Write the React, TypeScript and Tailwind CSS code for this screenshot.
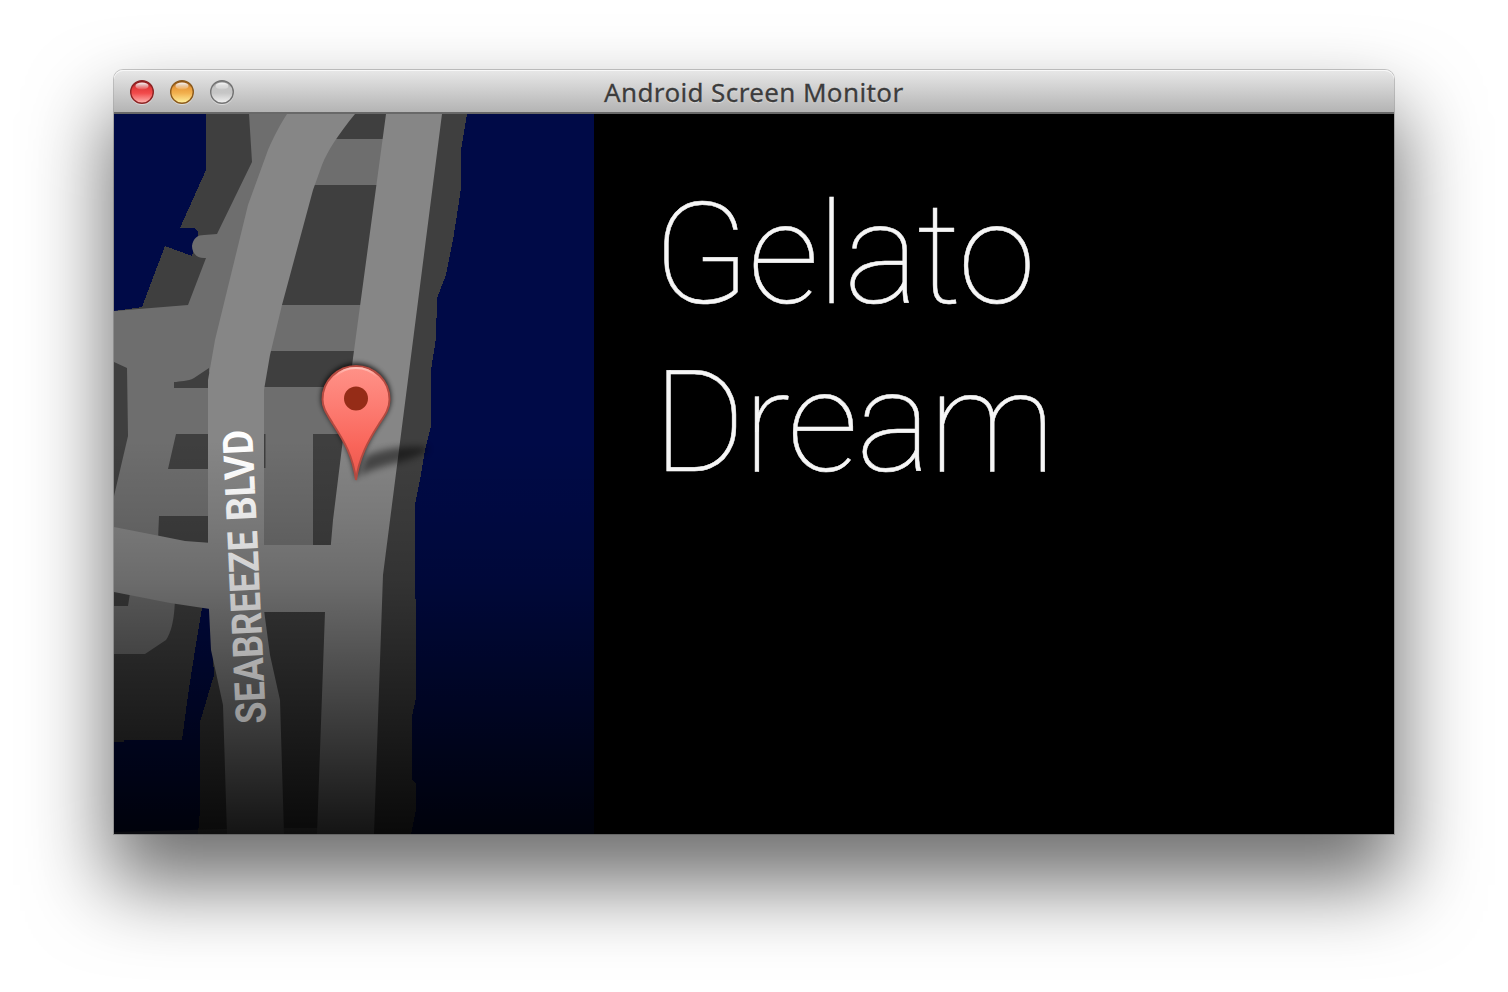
import React from "react";

function TrafficLights() {
  return (
    <svg className="relative top-px" width="112" height="28" viewBox="126 78 112 28" aria-hidden="true">
      <defs>
        <linearGradient id="red" x1="0" y1="0" x2="0" y2="1">
          <stop offset="0" stopColor="#7d1113" />
          <stop offset="0.3" stopColor="#e23a3b" />
          <stop offset="0.55" stopColor="#f24a4a" />
          <stop offset="1" stopColor="#ffb8b4" />
        </linearGradient>
        <linearGradient id="amber" x1="0" y1="0" x2="0" y2="1">
          <stop offset="0" stopColor="#83460d" />
          <stop offset="0.3" stopColor="#e89a3a" />
          <stop offset="0.55" stopColor="#f2b04e" />
          <stop offset="1" stopColor="#fff3a0" />
        </linearGradient>
        <linearGradient id="clear" x1="0" y1="0" x2="0" y2="1">
          <stop offset="0" stopColor="#808080" />
          <stop offset="0.3" stopColor="#c4c4c4" />
          <stop offset="0.55" stopColor="#c6c6c6" />
          <stop offset="1" stopColor="#f2f2f2" />
        </linearGradient>
        <linearGradient id="gloss" x1="0" y1="0" x2="0" y2="1">
          <stop offset="0" stopColor="#fff" stopOpacity="0.95" />
          <stop offset="1" stopColor="#fff" stopOpacity="0.1" />
        </linearGradient>
      </defs>
      {[
        { x: 142, fill: "url(#red)", ring: "#8c2424" },
        { x: 182, fill: "url(#amber)", ring: "#8b5a1c" },
        { x: 222, fill: "url(#clear)", ring: "#737373" },
      ].map((b) => (
        <g key={b.x}>
          <circle cx={b.x} cy="93" r="12" fill="#fff" opacity="0.45" />
          <circle cx={b.x} cy="92" r="11.3" fill={b.fill} stroke={b.ring} strokeWidth="1.4" />
          <ellipse cx={b.x} cy="86" rx="6.6" ry="3.4" fill="url(#gloss)" />
        </g>
      ))}
    </svg>
  );
}

function StreetMap() {
  return (
    <svg className="block shrink-0" width="480" height="720" viewBox="114 114 480 720">
      <defs>
        <linearGradient id="fade" gradientUnits="userSpaceOnUse" x1="0" y1="440" x2="0" y2="834">
          <stop offset="0" stopOpacity="0" />
          <stop offset="0.2" stopOpacity="0.1" />
          <stop offset="0.36" stopOpacity="0.2" />
          <stop offset="0.7" stopOpacity="0.54" />
          <stop offset="1" stopOpacity="0.85" />
        </linearGradient>
        <linearGradient id="pin" x1="0" y1="0" x2="0" y2="1">
          <stop offset="0" stopColor="#ff9288" />
          <stop offset="0.3" stopColor="#fd8076" />
          <stop offset="0.7" stopColor="#f9655a" />
          <stop offset="1" stopColor="#e8564b" />
        </linearGradient>
        <linearGradient id="rim" x1="0" y1="0" x2="0" y2="1">
          <stop offset="0" stopColor="#ffc0b8" />
          <stop offset="0.3" stopColor="#ffc0b8" stopOpacity="0" />
        </linearGradient>
        <linearGradient id="streetName" gradientUnits="userSpaceOnUse" x1="266" y1="0" x2="559" y2="0">
          <stop offset="0" stopColor="#969696" />
          <stop offset="0.6" stopColor="#dadada" />
          <stop offset="0.85" stopColor="#f8f8f8" />
          <stop offset="1" stopColor="#fff" />
        </linearGradient>
        <filter id="soft" x="-30%" y="-30%" width="160%" height="160%">
          <feGaussianBlur stdDeviation="2.5" />
        </filter>
        <filter id="softer" x="-30%" y="-50%" width="160%" height="200%">
          <feGaussianBlur stdDeviation="3.5" />
        </filter>
      </defs>

      <rect x="114" y="114" width="480" height="720" fill="#000a47" />

      {/* land */}
      <g shapeRendering="crispEdges">
        <path
          fill="#3f3f3f"
          d="M206 114H467L461 150V188L458 208L453 240L446 275L437 298L436 338L431 370V426L425 450L420 480L415 505V598L416 600V698L412 716V780L416 784V810L411 834H114V311L142 307L165 246L192 256L198 237V231L194 228H180L206 170Z"
        />
        <path fill="#000a47" d="M202 608H210L214 675L200 722V810L198 834H114V742H124V740H182L188 695L195 650Z" />
      </g>

      {/* minor streets */}
      <g fill="#6e6e6e">
        <path d="M249 114H300L215 370L186 383L174 382V388H270V434H176L168 469H270V516H159L158 540L114 530V496L128 436L127 368L114 362V311L188 305L206 258C196 259 192 252 192 246C193 238 198 235 204 235L217 234L252 162Z" />
        <path fill="#3f3f3f" d="M209 368L194 378C188 382 180 380 174 383V388H209Z" />
        <path d="M300 139H384V185H300ZM260 305H372V351H260ZM262 387H362V434H262ZM264 434H313V546H264Z" />
        <path d="M114 590L175 600C174 622 171 632 166 640L145 654H114Z" />
      </g>
      <path fill="#3f3f3f" d="M114 590L130 593L128 606H114Z" />
      <path fill="#3f3f3f" d="M264 434H265.500V468H264Z" />

      {/* main streets */}
      <g fill="#868686">
        <path d="M287 114H355C338 135 328 150 322 165L313 190L282 305L270 355L264 390L264 610L270 655L280 700L284 834H227L223 705L211 650L208 590V380L215 340L248 205L268 150C275 134 280 125 287 114Z" />
        <path d="M386 114H442L383 575L374 834H317L325 612L333 520L353 358Z" />
        <path d="M114 527L160 536L185 541L212 543L264 545H332L360 540V610L325 612H264L210 609L170 603L114 592Z" />
      </g>
      <path fill="#868686" d="M114 832L227 829V834H114ZM284 828H318V834H284Z" opacity="0.5" />

      <rect x="114" y="440" width="480" height="394" fill="url(#fade)" />

      {/* street name */}
      <g
        transform="rotate(-92.7 266 722)"
        fill="url(#streetName)"
        fontFamily="Roboto, sans-serif"
        fontWeight="700"
        fontSize="42"
      >
        <text x="265" y="722" textLength="193" lengthAdjust="spacingAndGlyphs">
          SEABREEZE
        </text>
        <text x="468" y="722" textLength="91" lengthAdjust="spacingAndGlyphs">
          BLVD
        </text>
      </g>

      {/* marker */}
      <path d="M358 477L366 456C382 449 405 445 426 447C433 450 418 457 400 462C384 466 368 470 358 477Z" opacity="0.48" filter="url(#softer)" />
      <path d="M356 481C352 455 343 440 332 423C326 413 321 408 321 398A35 35 0 0 1 391 398C391 408 386 415 380 424C369 440 360 457 356 481Z" opacity="0.75" filter="url(#soft)" />
      <path
        d="M356 480C353 456 344 441 333 424C327 414 322.500 408 322.500 399.500A33.500 33.500 0 0 1 389.500 399.500C389.500 409 385 415 379 424C368 441 359 458 356 480Z"
        fill="url(#pin)"
        stroke="#b44a40"
        strokeWidth="2"
      />
      <path d="M325.500 399A30.500 31 0 0 1 386.500 399" fill="none" stroke="url(#rim)" strokeWidth="2" />
      <circle cx="356" cy="398.500" r="12" fill="#952c17" />
    </svg>
  );
}

export default function App() {
  return (
    <div className="h-[992px] w-[1508px] overflow-hidden bg-white px-[114px] pt-[70px]">
      <main className="flex h-[764px] w-[1280px] flex-col rounded-t-[9px] shadow-[0_45px_80px_6px_rgba(0,0,0,0.56),0_0_0_1px_rgba(0,0,0,0.2)]">
        <header className="flex h-11 shrink-0 items-center rounded-t-[9px] border-b-2 border-[#686868] bg-linear-to-b from-[#e8e8e8] to-[#b4b4b4] pl-3 shadow-[inset_0_1px_0_#f8f8f8]">
          <TrafficLights />
          <h1 className="ml-[366px] pt-0.5 font-['Noto_Sans',sans-serif] text-[26px] leading-10 tracking-[0.38px] whitespace-nowrap text-[#3c3c3c] [-webkit-text-stroke:0.3px_#3c3c3c] [text-shadow:0_1px_1px_rgba(255,255,255,0.5)]">
            Android Screen Monitor
          </h1>
        </header>
        <section className="flex h-[720px] bg-black">
          <StreetMap />
          <p className="pt-[57px] pl-[59px] font-[Roboto,sans-serif] text-[141px] leading-[168px] font-thin tracking-[-1.9px] text-[#f6f6f6] [-webkit-text-stroke:0.5px_#f6f6f6]">
            Gelato
            <br />
            Dream
          </p>
        </section>
      </main>
    </div>
  );
}
